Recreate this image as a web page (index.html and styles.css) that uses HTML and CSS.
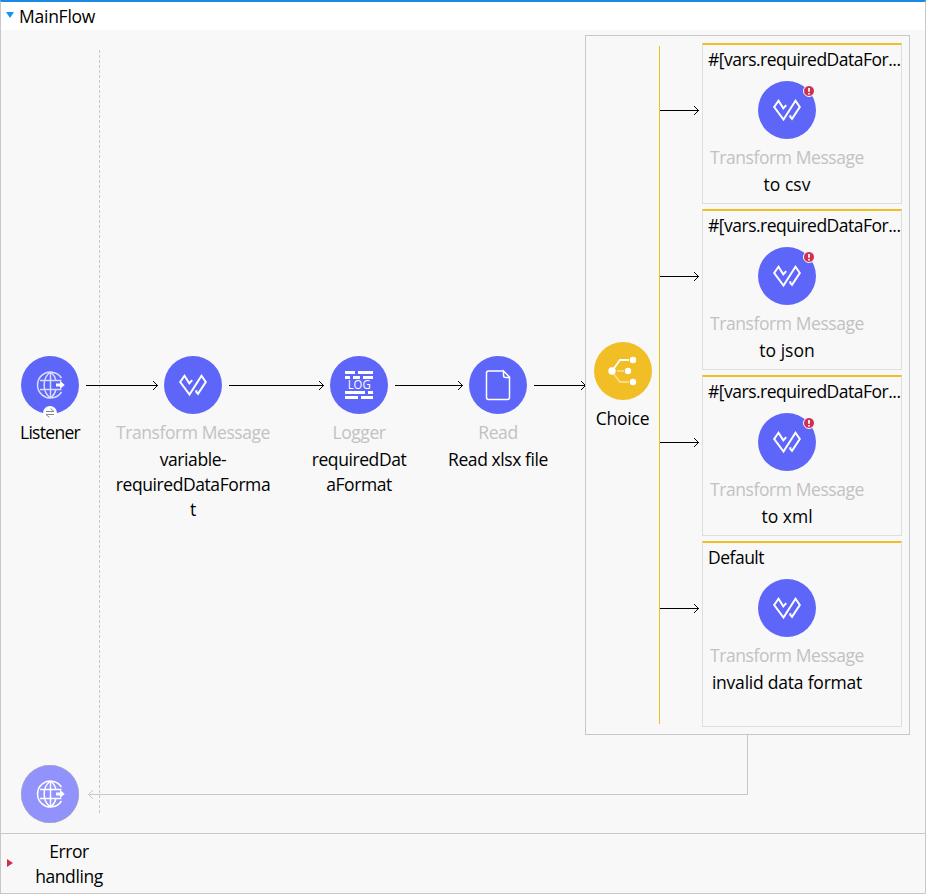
FILE: index.html
```html
<!DOCTYPE html>
<html lang="en">
<head>
<meta charset="utf-8">
<title>MainFlow</title>
<link rel="stylesheet" href="styles.css">
</head>
<body>
<svg class="defs" width="0" height="0" aria-hidden="true">
  <defs>
    <symbol id="weave" viewBox="0 0 58 58">
      <g fill="none" stroke="#fff" stroke-width="2">
        <path d="M28.2 24.2 L25.3 27.4 L20.5 19.8 L16.200 26 L25.5 38.500 L37.5 19.800 L41.800 26 L34 37.800 L32.200 35.800 L32.600 34.200"/>
      </g>
    </symbol>
    <symbol id="globe" viewBox="0 0 58 58">
      <g fill="none" stroke="currentColor" stroke-width="1.5">
        <path d="M40.5 22 A13 13 0 1 0 40.5 36 M29.5 16 V42 M29.5 16 C21 22 21 36 29.5 42 M29.5 16 Q34 19.5 35 25 M35 33 Q34 38.5 29.5 42 M19 24.5 H40.5 M19 33.5 H40.5"/>
      </g>
      <path d="M35 27.5 H39 V24.8 L43.7 29 L39 33 V30.5 H35Z" fill="#fff"/>
    </symbol>
  </defs>
</svg>
<main class="flow">
  <header class="title"><svg width="8" height="6"><path d="M0 0H8L4 6Z" fill="#0f96f8"/></svg><span>MainFlow</span></header>
  <section class="canvas">
    <svg class="wires" width="924" height="803" viewBox="1 30 924 803" fill="none">
      <path d="M99.5 50V814" stroke="#c8c8c8" stroke-dasharray="3 2"/>
      <g stroke="#000">
        <path d="M86 385.5H158M229 385.5H324M395 385.5H463M534 385.5H586"/>
        <path d="M153 381L157.500 385.5L153 390M319 381L323.500 385.500L319 390M458 381L462.500 385.500L458 390M581 381L585.500 385.500L581 390"/>
      </g>
      <path d="M747.500 735V794.500H89M93 790L88.500 794.500L93 799" stroke="#c8c8c8"/>
    </svg>

    <div class="node listener">
      <div class="disc"><svg><use href="#globe"/></svg>
        <span class="exchange"><svg width="14" height="14" viewBox="0 0 14 14" fill="none" stroke="#888"><path d="M3 5.500H11L7.500 2.500M11 8.500H3L6.500 11.500"/></svg></span>
      </div>
      <p class="name listener-name">Listener</p>
    </div>
    <div class="node variable">
      <div class="disc"><svg><use href="#weave"/></svg></div>
      <p class="kind">Transform Message</p>
      <p class="name">variable-<br>requiredDataForma<br>t</p>
    </div>
    <div class="node logger">
      <div class="disc"><svg viewBox="0 0 58 58"><path d="M15 16.500H25M28 16.500H43M15 21.500H20M23 21.500H30M33 21.500H43M15 36.500H35M38 36.500H43M15 41.500H28M31 41.500H43" stroke="#fff" stroke-width="3"/><text x="29.200" y="33.200" class="log" textLength="23" lengthAdjust="spacingAndGlyphs">LOG</text></svg></div>
      <p class="kind">Logger</p>
      <p class="name">requiredDat<br>aFormat</p>
    </div>
    <div class="node read">
      <div class="disc"><svg viewBox="0 0 58 58" fill="none" stroke="#fff" stroke-width="1.500"><path d="M34 15H19.500Q17.500 15 17.500 17V41.500Q17.500 43.500 19.500 43.500H38.500Q40.500 43.500 40.500 41.500V21L34.500 15V19.500Q34.500 21.500 36.500 21.500H40"/></svg></div>
      <p class="kind">Read</p>
      <p class="name">Read xlsx file</p>
    </div>
    <div class="node response">
      <div class="disc faded"><svg><use href="#globe"/></svg></div>
    </div>

    <div class="choice">
      <div class="router">
        <div class="disc gold"><svg viewBox="0 0 58 58" fill="none" stroke-width="1.800"><path d="M18 29L26 18H35" stroke="#fff"/><path d="M23 29H30" stroke="#f9dc88"/><path d="M20 32L26 40H35" stroke="#f9dc88"/><g fill="#fff"><circle cx="18" cy="29" r="3.700"/><circle cx="39" cy="18" r="3.200"/><circle cx="34" cy="29" r="3.200"/><circle cx="39" cy="40" r="3.200"/></g></svg></div>
        <p class="name choice-name">Choice</p>
      </div>
      <div class="rail"></div>
      <div class="branches">
        <div class="branch">
          <svg class="arrow" width="41" height="12" fill="none" stroke="#000"><path d="M0 6.500H39M34 2L38.500 6.500L34 11"/></svg>
          <article class="card">
            <h2 class="cond">#[vars.requiredDataFor...</h2>
            <div class="step"><div class="disc"><svg><use href="#weave"/></svg><svg class="alert" viewBox="0 0 12 12"><circle cx="6" cy="6" r="5.500" fill="#cf3050" stroke="#fff"/><path d="M6 3V6.800M6 8V9.500" stroke="#fff" stroke-width="1.800"/></svg></div><p class="kind">Transform Message</p><p class="name wide">to csv</p></div>
          </article>
        </div>
        <div class="branch">
          <svg class="arrow" width="41" height="12" fill="none" stroke="#000"><path d="M0 6.500H39M34 2L38.500 6.500L34 11"/></svg>
          <article class="card">
            <h2 class="cond">#[vars.requiredDataFor...</h2>
            <div class="step"><div class="disc"><svg><use href="#weave"/></svg><svg class="alert" viewBox="0 0 12 12"><circle cx="6" cy="6" r="5.500" fill="#cf3050" stroke="#fff"/><path d="M6 3V6.800M6 8V9.500" stroke="#fff" stroke-width="1.800"/></svg></div><p class="kind">Transform Message</p><p class="name wide">to json</p></div>
          </article>
        </div>
        <div class="branch">
          <svg class="arrow" width="41" height="12" fill="none" stroke="#000"><path d="M0 6.500H39M34 2L38.500 6.500L34 11"/></svg>
          <article class="card">
            <h2 class="cond">#[vars.requiredDataFor...</h2>
            <div class="step"><div class="disc"><svg><use href="#weave"/></svg><svg class="alert" viewBox="0 0 12 12"><circle cx="6" cy="6" r="5.500" fill="#cf3050" stroke="#fff"/><path d="M6 3V6.800M6 8V9.500" stroke="#fff" stroke-width="1.800"/></svg></div><p class="kind">Transform Message</p><p class="name wide">to xml</p></div>
          </article>
        </div>
        <div class="branch last">
          <svg class="arrow" width="41" height="12" fill="none" stroke="#000"><path d="M0 6.500H39M34 2L38.500 6.500L34 11"/></svg>
          <article class="card">
            <h2 class="cond">Default</h2>
            <div class="step"><div class="disc"><svg><use href="#weave"/></svg></div><p class="kind">Transform Message</p><p class="name invalid">invalid data format</p></div>
          </article>
        </div>
      </div>
    </div>
  </section>
  <footer class="errors"><svg width="6" height="8"><path d="M0 0L6 4L0 8Z" fill="#d0304f"/></svg><p class="name">Error<br>handling</p></footer>
</main>
</body>
</html>
```

FILE: styles.css
```css
* { box-sizing: border-box; }
body { margin: 0; font: 17.5px/25px "Open Sans", "Noto Sans", sans-serif; color: #000; }
p, h2 { margin: 0; font-size: inherit; font-weight: 400; white-space: nowrap; }
.defs { position: absolute; }
.flow { width: 926px; height: 894px; display: flex; flex-direction: column; background: #f8f8f8; border: 1px solid #c8c8c8; border-top: 2px solid #1b8ae6; }
.title { height: 28px; flex: none; background: #fff; display: flex; align-items: flex-start; padding-left: 5px; gap: 5px; letter-spacing: -.25px; }
.title svg { margin-top: 10px; }
.title span { line-height: 29px; }
.canvas { position: relative; height: 803px; flex: none; }
.wires { position: absolute; left: 0; top: 0; }
.node { position: absolute; top: 326px; width: 170px; display: flex; flex-direction: column; align-items: center; text-align: center; }
.listener { left: -36px; }
.variable { left: 107px; }
.logger { left: 273px; }
.read { left: 412px; }
.response { left: -36px; top: 735px; }
.disc { position: relative; width: 58px; height: 58px; border-radius: 50%; background: #5e66f9; color: #dadcff; flex: none; }
.disc > svg { display: block; width: 58px; height: 58px; }
.faded { background: #9292fd; color: #fff; box-shadow: inset 0 0 0 .5px #aaa; }
.gold { background: #f2be26; }
.exchange { position: absolute; left: 22px; top: 50px; width: 14px; height: 14px; border-radius: 50%; background: #fff; }
.exchange svg { display: block; }
.disc .alert { position: absolute; left: 45px; top: 4px; width: 12px; height: 12px; }
.kind { color: #c2c2c2; margin-top: 6px; margin-bottom: 2px; letter-spacing: -.42px; }
.name { letter-spacing: -.42px; }
.listener-name { margin-top: 6px; letter-spacing: -.7px; }
.choice-name { letter-spacing: -.2px; }
.wide { letter-spacing: 0; }
.invalid { letter-spacing: -.22px; }
.log { fill: #fff; font: 12px "Open Sans", sans-serif; text-anchor: middle; }
.choice { position: absolute; left: 584px; top: 5px; width: 325px; height: 700px; border: 1px solid #c8c8c8; display: flex; }
.router { width: 73px; padding: 306px 0 0; display: flex; flex-direction: column; align-items: center; gap: 6px; }
.rail { width: 1px; height: 678px; margin-top: 10px; background: #f2be26; }
.branches { padding-top: 7px; display: flex; flex-direction: column; gap: 5px; }
.branch { height: 161px; display: flex; gap: 1px; }
.last { height: 186px; }
.arrow { margin-top: 61px; flex: none; }
.card { width: 200px; border: 1px solid #dedede; border-top: 2px solid #f2be26; }
.cond { height: 36px; line-height: 29px; padding-left: 5px; letter-spacing: -.5px; }
.step { width: 168px; display: flex; flex-direction: column; align-items: center; }
.errors { flex: 1; border-top: 1px solid #c8c8c8; display: flex; align-items: flex-start; padding-left: 6px; }
.errors svg { margin-top: 25px; }
.errors p { width: 112px; text-align: center; padding-top: 5px; }
```
